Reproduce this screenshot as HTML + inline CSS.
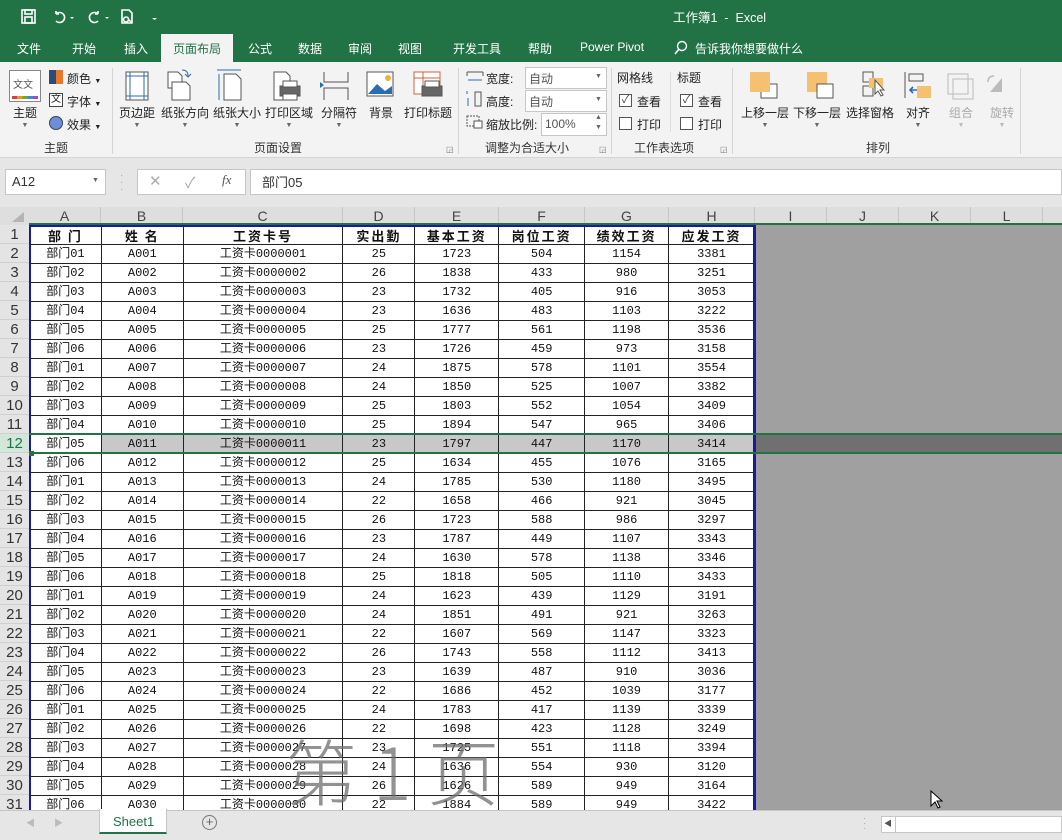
<!DOCTYPE html>
<html><head><meta charset="utf-8">
<style>
*{margin:0;padding:0;box-sizing:border-box}
body{width:1062px;height:840px;overflow:hidden;background:#e6e6e6;font-family:"Liberation Sans","Noto Sans CJK SC",sans-serif;position:relative;font-size:12px;color:#222}
.a{position:absolute}
.w{color:#fff}
.t{font-size:12px;white-space:nowrap}
.gl{color:#333;font-size:12px;white-space:nowrap}
.sep{position:absolute;top:68px;width:1px;height:86px;background:#d4d4d4}
.bl{position:absolute;font-size:12px;white-space:nowrap;transform:translateX(-50%);text-align:center}
.dd{position:absolute;font-size:7px;color:#666;transform:translateX(-50%)}
table{border-collapse:collapse;table-layout:fixed;position:absolute;left:29px;top:225px}
td{height:19px;border:1px solid #222;text-align:center;font-family:"Liberation Mono","Noto Sans CJK SC",monospace;font-size:12px;padding:0;line-height:17px;white-space:nowrap;overflow:hidden;background:#fff;color:#111}
tr.h td{font-weight:bold;letter-spacing:2px;font-family:"Noto Sans CJK SC",sans-serif;font-size:13px}
tr.s td{background:#c8c8c8}
tr.s td:first-child{background:#fff}
.rh{position:absolute;left:0;width:29px;height:19px;font-size:15px;text-align:center;color:#333;border-bottom:1px solid #d0d0d0;line-height:19px;background:#e4e4e4;font-family:"Liberation Sans",sans-serif}
.ch{position:absolute;top:207px;height:18px;font-size:14px;text-align:center;color:#444;border-right:1px solid #c6c6c6;line-height:18px;background:#dedede}
.cb{position:absolute;width:13px;height:13px;border:1px solid #555;background:#fff;font-size:11px;line-height:11px;text-align:center;color:#444}
.icon{position:absolute}
</style></head><body>
<div class="a" style="left:0;top:0;width:1062px;height:62px;background:#217346"></div>
<svg class="a" style="left:18px;top:6px" width="150" height="22" viewBox="0 0 150 22">
<g fill="none" stroke="#fff" stroke-width="1.6">
<rect x="4" y="4" width="13" height="13"/><rect x="7" y="4" width="7" height="4"/><rect x="7" y="11" width="7" height="6"/>
<path d="M38 8a5 5 0 1 1 0 7M38 8l0-3M38 8l3 0"/>
<path d="M80 8a5 5 0 1 0 0 7M80 8l0-3M80 8l-3 0"/>
<path d="M104 4h7l3 3v10h-10zM108 11a2.5 2.5 0 1 0 .1 0M110 13l3 3"/>
</g>
<g fill="#fff"><path d="M52 11l4 0-2 2z"/><path d="M87 11l4 0-2 2z"/><path d="M134 10h5M134 12l5 0-2.5 2z"/></g>
</svg>
<div class="a w t" style="left:673px;top:7px;font-size:12.5px">工作簿1 &nbsp;- &nbsp;Excel</div>
<div class="a w t" style="left:17px;top:40px">文件</div>
<div class="a w t" style="left:72px;top:40px">开始</div>
<div class="a w t" style="left:124px;top:40px">插入</div>
<div class="a" style="left:161px;top:34px;width:72px;height:29px;background:#f3f3f3"></div>
<div class="a t" style="left:173px;top:40px;color:#217346">页面布局</div>
<div class="a w t" style="left:248px;top:40px">公式</div>
<div class="a w t" style="left:298px;top:40px">数据</div>
<div class="a w t" style="left:348px;top:40px">审阅</div>
<div class="a w t" style="left:398px;top:40px">视图</div>
<div class="a w t" style="left:453px;top:40px">开发工具</div>
<div class="a w t" style="left:528px;top:40px">帮助</div>
<div class="a w t" style="left:580px;top:40px">Power Pivot</div>
<svg class="a" style="left:673px;top:40px" width="16" height="16"><circle cx="9" cy="6" r="4.5" fill="none" stroke="#fff" stroke-width="1.4"/><path d="M6 9l-4 5" stroke="#fff" stroke-width="1.6"/></svg>
<div class="a w t" style="left:695px;top:40px">告诉我你想要做什么</div>
<div class="a" style="left:0;top:62px;width:1062px;height:96px;background:#f3f3f3;border-bottom:1px solid #d5d5d5"></div>
<div class="sep" style="left:112px"></div><div class="sep" style="left:458px"></div><div class="sep" style="left:611px"></div><div class="sep" style="left:732px"></div><div class="sep" style="left:1020px"></div>
<div class="a" style="left:9px;top:70px;width:32px;height:32px;border:1px solid #888;background:#fff"></div>
<div class="a" style="left:13px;top:76px;font-size:10px;color:#555">文文</div>
<div class="a" style="left:12px;top:96px;width:26px;height:3px;background:linear-gradient(90deg,#c44 0 20%,#e90 0 40%,#6a4 0 60%,#48c 0 80%,#a4c 0)"></div>
<div class="bl" style="left:25px;top:104px">主题</div><div class="dd" style="left:25px;top:122px">▼</div>
<div class="a" style="left:49px;top:70px;width:14px;height:14px;background:linear-gradient(90deg,#2e4a78 50%,#e8782c 50%)"></div>
<div class="a t" style="left:67px;top:70px">颜色 <span style="font-size:7px">▼</span></div>
<div class="a" style="left:49px;top:93px;width:14px;height:14px;border:1px solid #444;background:#fff;font-size:10px;line-height:12px;text-align:center">文</div>
<div class="a t" style="left:67px;top:93px">字体 <span style="font-size:7px">▼</span></div>
<div class="a" style="left:49px;top:116px;width:14px;height:14px;border-radius:50%;background:#6c8fd6;border:1px solid #345"></div>
<div class="a t" style="left:67px;top:116px">效果 <span style="font-size:7px">▼</span></div>
<div class="bl gl" style="left:56px;top:139px">主题</div>
<svg class="a" style="left:118px;top:68px" width="340" height="36" viewBox="0 0 340 36" fill="none" stroke="#555" stroke-width="1">
<rect x="8" y="4" width="22" height="28" fill="#fff"/><path d="M12 4v28M26 4v28M8 8h22M8 28h22" stroke="#2b6cb0"/>
<path d="M50 4h10l4 4v12H50z" fill="#fff"/><path d="M54 14h14l4 4v14H54z" fill="#fff"/><path d="M64 2q6 0 6 6" stroke="#2b6cb0"/><path d="M67 6l3 3 3-3" stroke="#2b6cb0"/>
<path d="M106 6h12l5 5v21h-17z" fill="#fff"/><path d="M101 6v26M99 2h24" stroke="#2b6cb0"/>
<path d="M156 4h12l4 4v24h-16z" fill="#fff"/><rect x="162" y="18" width="20" height="10" fill="#666"/><rect x="165" y="13" width="14" height="6" fill="#fff"/><rect x="165" y="26" width="14" height="6" fill="#fff"/>
<path d="M206 4v10h24V4M206 32V20h24v12"/><path d="M202 14l4 3-4 3z" fill="#2b6cb0" stroke="none"/>
<rect x="249" y="4" width="26" height="24" fill="#fff"/><path d="M250 26l9-10 8 7 7-5v8z" fill="#2b6cb0" stroke="none"/><circle cx="270" cy="10" r="3" fill="#f0b040" stroke="none"/>
<rect x="296" y="4" width="26" height="22" fill="#fff" stroke="#d06040"/><path d="M296 10h26M305 4v22" stroke="#d06040"/><rect x="304" y="18" width="20" height="10" fill="#666"/><rect x="307" y="13" width="14" height="6" fill="#fff"/>
</svg>
<div class="bl" style="left:137px;top:104px">页边距</div><div class="dd" style="left:137px;top:122px">▼</div>
<div class="bl" style="left:185px;top:104px">纸张方向</div><div class="dd" style="left:185px;top:122px">▼</div>
<div class="bl" style="left:237px;top:104px">纸张大小</div><div class="dd" style="left:237px;top:122px">▼</div>
<div class="bl" style="left:289px;top:104px">打印区域</div><div class="dd" style="left:289px;top:122px">▼</div>
<div class="bl" style="left:339px;top:104px">分隔符</div><div class="dd" style="left:339px;top:122px">▼</div>
<div class="bl" style="left:381px;top:104px">背景</div>
<div class="bl" style="left:428px;top:104px">打印标题</div>
<div class="bl gl" style="left:278px;top:139px">页面设置</div>
<div class="a" style="left:446px;top:145px;font-size:8px;color:#777">◲</div>
<svg class="a" style="left:465px;top:68px" width="22" height="66" fill="none" stroke="#555"><path d="M2 4h16M2 4v4M18 4v4"/><path d="M3 12h14" stroke="#2b6cb0"/><path d="M2 26v-3M3 30v8" stroke="#2b6cb0"/><rect x="10" y="24" width="6" height="14"/><rect x="2" y="48" width="12" height="10" stroke-dasharray="2 1"/><rect x="9" y="53" width="8" height="7" fill="#fff"/></svg>
<div class="a t" style="left:486px;top:70px">宽度:</div>
<div class="a t" style="left:486px;top:93px">高度:</div>
<div class="a t" style="left:486px;top:116px">缩放比例:</div>
<div class="a" style="left:525px;top:67px;width:82px;height:22px;background:#fff;border:1px solid #c6c6c6"></div>
<div class="a t" style="left:529px;top:70px;color:#555">自动</div><div class="a" style="left:595px;top:73px;font-size:7px;color:#666">▼</div>
<div class="a" style="left:525px;top:90px;width:82px;height:22px;background:#fff;border:1px solid #c6c6c6"></div>
<div class="a t" style="left:529px;top:93px;color:#555">自动</div><div class="a" style="left:595px;top:96px;font-size:7px;color:#666">▼</div>
<div class="a" style="left:541px;top:113px;width:66px;height:23px;background:#fff;border:1px solid #c6c6c6"></div>
<div class="a t" style="left:545px;top:117px;color:#555">100%</div><div class="a" style="left:595px;top:113px;font-size:7px;color:#666;line-height:10px">▲<br>▼</div>
<div class="bl gl" style="left:527px;top:139px">调整为合适大小</div>
<div class="a" style="left:599px;top:145px;font-size:8px;color:#777">◲</div>
<div class="a t" style="left:617px;top:69px">网格线</div>
<div class="a t" style="left:677px;top:69px">标题</div>
<div class="a" style="left:670px;top:72px;width:1px;height:60px;background:#ddd"></div>
<div class="cb" style="left:619px;top:94px">✓</div><div class="a t" style="left:637px;top:93px">查看</div>
<div class="cb" style="left:619px;top:117px"></div><div class="a t" style="left:637px;top:116px">打印</div>
<div class="cb" style="left:680px;top:94px">✓</div><div class="a t" style="left:698px;top:93px">查看</div>
<div class="cb" style="left:680px;top:117px"></div><div class="a t" style="left:698px;top:116px">打印</div>
<div class="bl gl" style="left:664px;top:139px">工作表选项</div>
<div class="a" style="left:720px;top:145px;font-size:8px;color:#777">◲</div>
<svg class="a" style="left:745px;top:68px" width="275" height="36" fill="none" stroke="#555">
<rect x="16" y="16" width="16" height="14" fill="#fff"/><rect x="5" y="4" width="20" height="20" fill="#f5c070" stroke="none"/>
<rect x="62" y="4" width="20" height="20" fill="#f5c070" stroke="none"/><rect x="72" y="16" width="16" height="14" fill="#fff"/>
<rect x="118" y="4" width="10" height="10"/><rect x="118" y="18" width="10" height="10"/><rect x="124" y="10" width="14" height="10" fill="#f5c070" stroke="none"/><path d="M130 12l0 14 3-3 3 5 2-1-3-5 4 0z" fill="#fff"/>
<path d="M160 4v26"/><rect x="164" y="6" width="14" height="7"/><rect x="172" y="18" width="14" height="12" fill="#f5c070" stroke="none"/><path d="M166 22h6M168 19l-3 3 3 3" stroke="#2b6cb0" stroke-width="1.6"/>
<g stroke="#bbb"><rect x="203" y="6" width="20" height="20"/><rect x="208" y="11" width="20" height="20"/></g>
<path d="M245 24l12-14v14z" fill="#bbb" stroke="none"/><path d="M243 14q0-6 6-6" stroke="#bbb" stroke-width="1.5"/>
</svg>
<div class="bl" style="left:765px;top:104px">上移一层</div><div class="dd" style="left:765px;top:122px">▼</div>
<div class="bl" style="left:817px;top:104px">下移一层</div><div class="dd" style="left:817px;top:122px">▼</div>
<div class="bl" style="left:870px;top:104px">选择窗格</div>
<div class="bl" style="left:918px;top:104px">对齐</div><div class="dd" style="left:918px;top:122px">▼</div>
<div class="bl" style="left:961px;top:104px;color:#aaa">组合</div><div class="dd" style="left:961px;top:122px;color:#bbb">▼</div>
<div class="bl" style="left:1002px;top:104px;color:#aaa">旋转</div><div class="dd" style="left:1002px;top:122px;color:#bbb">▼</div>
<div class="bl gl" style="left:878px;top:139px">排列</div>
<div class="a" style="left:5px;top:169px;width:101px;height:26px;background:#fff;border:1px solid #c6c6c6"></div>
<div class="a" style="left:12px;top:174px;font-size:13px;color:#333">A12</div>
<div class="a" style="left:92px;top:177px;font-size:7px;color:#666">▼</div>
<div class="a" style="left:120px;top:172px;color:#aaa;font-size:10px;line-height:7px">·<br>·<br>·</div>
<div class="a" style="left:137px;top:169px;width:109px;height:26px;background:#fff;border:1px solid #c6c6c6"></div>
<div class="a" style="left:149px;top:172px;color:#aaa;font-size:15px">✕</div>
<div class="a" style="left:185px;top:172px;color:#aaa;font-size:15px">✓</div>
<div class="a" style="left:222px;top:172px;color:#555;font-size:13px;font-style:italic;font-family:'Liberation Serif',serif">fx</div>
<div class="a" style="left:250px;top:169px;width:812px;height:26px;background:#fff;border:1px solid #c6c6c6"></div>
<div class="a" style="left:262px;top:172px;font-size:13px;color:#333">部门05</div>
<div class="a" style="left:0;top:207px;width:1062px;height:18px;background:#dedede"></div>
<div class="a" style="left:12px;top:212px;width:0;height:0;border-left:12px solid transparent;border-bottom:10px solid #b4b4b4"></div>
<div class="ch" style="left:29px;width:72px">A</div><div class="ch" style="left:101px;width:82px">B</div><div class="ch" style="left:183px;width:160px">C</div><div class="ch" style="left:343px;width:72px">D</div><div class="ch" style="left:415px;width:84px">E</div><div class="ch" style="left:499px;width:86px">F</div><div class="ch" style="left:585px;width:84px">G</div><div class="ch" style="left:669px;width:86px">H</div><div class="ch" style="left:755px;width:72px">I</div><div class="ch" style="left:827px;width:72px">J</div><div class="ch" style="left:899px;width:72px">K</div><div class="ch" style="left:971px;width:72px">L</div>
<div class="a" style="left:29px;top:223px;width:1033px;height:2px;background:#217346"></div>
<div class="a" style="left:0;top:225px;width:29px;height:585px;background:#e4e4e4;overflow:hidden">
<div class="rh" style="top:0">1</div><div class="rh" style="top:19px">2</div><div class="rh" style="top:38px">3</div><div class="rh" style="top:57px">4</div><div class="rh" style="top:76px">5</div><div class="rh" style="top:95px">6</div><div class="rh" style="top:114px">7</div><div class="rh" style="top:133px">8</div><div class="rh" style="top:152px">9</div><div class="rh" style="top:171px">10</div><div class="rh" style="top:190px">11</div><div class="rh" style="top:209px;background:#d2e6da;color:#217346">12</div><div class="rh" style="top:228px">13</div><div class="rh" style="top:247px">14</div><div class="rh" style="top:266px">15</div><div class="rh" style="top:285px">16</div><div class="rh" style="top:304px">17</div><div class="rh" style="top:323px">18</div><div class="rh" style="top:342px">19</div><div class="rh" style="top:361px">20</div><div class="rh" style="top:380px">21</div><div class="rh" style="top:399px">22</div><div class="rh" style="top:418px">23</div><div class="rh" style="top:437px">24</div><div class="rh" style="top:456px">25</div><div class="rh" style="top:475px">26</div><div class="rh" style="top:494px">27</div><div class="rh" style="top:513px">28</div><div class="rh" style="top:532px">29</div><div class="rh" style="top:551px">30</div><div class="rh" style="top:570px">31</div>
</div>
<div class="a" style="left:755px;top:225px;width:307px;height:585px;background:#a0a0a0"></div>
<div class="a" style="left:755px;top:434px;width:307px;height:19px;background:#707070"></div>
<div class="a" style="left:29px;top:225px;width:726px;height:585px;overflow:hidden">
<table style="left:0;top:0">
<colgroup><col style="width:72px"><col style="width:82px"><col style="width:160px"><col style="width:72px"><col style="width:84px"><col style="width:86px"><col style="width:84px"><col style="width:86px"></colgroup>
<tr class="h"><td>部 门</td><td>姓 名</td><td>工资卡号</td><td>实出勤</td><td>基本工资</td><td>岗位工资</td><td>绩效工资</td><td>应发工资</td></tr>
<tr><td>部门01</td><td>A001</td><td>工资卡0000001</td><td>25</td><td>1723</td><td>504</td><td>1154</td><td>3381</td></tr>
<tr><td>部门02</td><td>A002</td><td>工资卡0000002</td><td>26</td><td>1838</td><td>433</td><td>980</td><td>3251</td></tr>
<tr><td>部门03</td><td>A003</td><td>工资卡0000003</td><td>23</td><td>1732</td><td>405</td><td>916</td><td>3053</td></tr>
<tr><td>部门04</td><td>A004</td><td>工资卡0000004</td><td>23</td><td>1636</td><td>483</td><td>1103</td><td>3222</td></tr>
<tr><td>部门05</td><td>A005</td><td>工资卡0000005</td><td>25</td><td>1777</td><td>561</td><td>1198</td><td>3536</td></tr>
<tr><td>部门06</td><td>A006</td><td>工资卡0000006</td><td>23</td><td>1726</td><td>459</td><td>973</td><td>3158</td></tr>
<tr><td>部门01</td><td>A007</td><td>工资卡0000007</td><td>24</td><td>1875</td><td>578</td><td>1101</td><td>3554</td></tr>
<tr><td>部门02</td><td>A008</td><td>工资卡0000008</td><td>24</td><td>1850</td><td>525</td><td>1007</td><td>3382</td></tr>
<tr><td>部门03</td><td>A009</td><td>工资卡0000009</td><td>25</td><td>1803</td><td>552</td><td>1054</td><td>3409</td></tr>
<tr><td>部门04</td><td>A010</td><td>工资卡0000010</td><td>25</td><td>1894</td><td>547</td><td>965</td><td>3406</td></tr>
<tr class="s"><td>部门05</td><td>A011</td><td>工资卡0000011</td><td>23</td><td>1797</td><td>447</td><td>1170</td><td>3414</td></tr>
<tr><td>部门06</td><td>A012</td><td>工资卡0000012</td><td>25</td><td>1634</td><td>455</td><td>1076</td><td>3165</td></tr>
<tr><td>部门01</td><td>A013</td><td>工资卡0000013</td><td>24</td><td>1785</td><td>530</td><td>1180</td><td>3495</td></tr>
<tr><td>部门02</td><td>A014</td><td>工资卡0000014</td><td>22</td><td>1658</td><td>466</td><td>921</td><td>3045</td></tr>
<tr><td>部门03</td><td>A015</td><td>工资卡0000015</td><td>26</td><td>1723</td><td>588</td><td>986</td><td>3297</td></tr>
<tr><td>部门04</td><td>A016</td><td>工资卡0000016</td><td>23</td><td>1787</td><td>449</td><td>1107</td><td>3343</td></tr>
<tr><td>部门05</td><td>A017</td><td>工资卡0000017</td><td>24</td><td>1630</td><td>578</td><td>1138</td><td>3346</td></tr>
<tr><td>部门06</td><td>A018</td><td>工资卡0000018</td><td>25</td><td>1818</td><td>505</td><td>1110</td><td>3433</td></tr>
<tr><td>部门01</td><td>A019</td><td>工资卡0000019</td><td>24</td><td>1623</td><td>439</td><td>1129</td><td>3191</td></tr>
<tr><td>部门02</td><td>A020</td><td>工资卡0000020</td><td>24</td><td>1851</td><td>491</td><td>921</td><td>3263</td></tr>
<tr><td>部门03</td><td>A021</td><td>工资卡0000021</td><td>22</td><td>1607</td><td>569</td><td>1147</td><td>3323</td></tr>
<tr><td>部门04</td><td>A022</td><td>工资卡0000022</td><td>26</td><td>1743</td><td>558</td><td>1112</td><td>3413</td></tr>
<tr><td>部门05</td><td>A023</td><td>工资卡0000023</td><td>23</td><td>1639</td><td>487</td><td>910</td><td>3036</td></tr>
<tr><td>部门06</td><td>A024</td><td>工资卡0000024</td><td>22</td><td>1686</td><td>452</td><td>1039</td><td>3177</td></tr>
<tr><td>部门01</td><td>A025</td><td>工资卡0000025</td><td>24</td><td>1783</td><td>417</td><td>1139</td><td>3339</td></tr>
<tr><td>部门02</td><td>A026</td><td>工资卡0000026</td><td>22</td><td>1698</td><td>423</td><td>1128</td><td>3249</td></tr>
<tr><td>部门03</td><td>A027</td><td>工资卡0000027</td><td>23</td><td>1725</td><td>551</td><td>1118</td><td>3394</td></tr>
<tr><td>部门04</td><td>A028</td><td>工资卡0000028</td><td>24</td><td>1636</td><td>554</td><td>930</td><td>3120</td></tr>
<tr><td>部门05</td><td>A029</td><td>工资卡0000029</td><td>26</td><td>1626</td><td>589</td><td>949</td><td>3164</td></tr>
<tr><td>部门06</td><td>A030</td><td>工资卡0000030</td><td>22</td><td>1884</td><td>589</td><td>949</td><td>3422</td></tr>
</table>
</div>
<div class="a" style="left:29px;top:225px;width:2px;height:585px;background:#1a1aa0"></div>
<div class="a" style="left:753px;top:225px;width:3px;height:585px;background:#1a1aa0"></div>
<div class="a" style="left:29px;top:225px;width:726px;height:2px;background:#1a1aa0"></div>
<div class="a" style="left:29px;top:433px;width:1033px;height:21px;border-top:2px solid #217346;border-bottom:2px solid #217346"></div>
<div class="a" style="left:29px;top:451px;width:5px;height:5px;background:#217346"></div>
<div class="a" style="left:285px;top:733px;font-size:72px;line-height:1;color:rgba(110,110,110,0.75);font-family:'Noto Sans CJK SC',sans-serif;font-weight:300;white-space:nowrap">第 1 页</div>
<svg class="a" style="left:930px;top:790px" width="14" height="20"><path d="M1 1v15l4-4 3 6 2-1-3-6h5z" fill="#fff" stroke="#000"/></svg>
<div class="a" style="left:0;top:810px;width:1062px;height:30px;background:#e6e6e6;border-top:1px solid #c6c6c6"></div>
<div class="a" style="left:26px;top:816px;color:#bbb;font-size:9px">◀</div>
<div class="a" style="left:54px;top:816px;color:#bbb;font-size:9px">▶</div>
<div class="a" style="left:99px;top:809px;width:68px;height:25px;background:#fff;border-bottom:2px solid #217346;border-left:1px solid #c6c6c6;border-right:1px solid #c6c6c6"></div>
<div class="a" style="left:113px;top:814px;font-size:13px;color:#217346">Sheet1</div>
<div class="a" style="left:202px;top:815px;width:15px;height:15px;border-radius:50%;border:1px solid #777;text-align:center;line-height:12px;font-size:13px;color:#666">+</div>
<div class="a" style="left:863px;top:816px;color:#aaa;font-size:10px;line-height:5px">·<br>·<br>·</div>
<div class="a" style="left:881px;top:816px;width:181px;height:17px;background:#fff;border:1px solid #c6c6c6"></div>
<div class="a" style="left:881px;top:816px;width:15px;height:17px;border-right:1px solid #c6c6c6;font-size:8px;color:#555;text-align:center;line-height:15px">◀</div>
</body></html>
